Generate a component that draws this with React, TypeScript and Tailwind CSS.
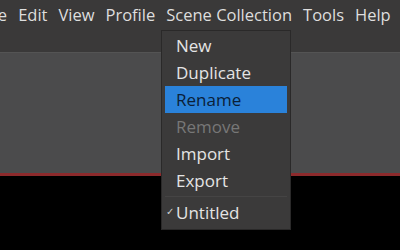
export default function App() {
  const items = [
    { label: "New" },
    { label: "Duplicate" },
    { label: "Rename", active: true },
    { label: "Remove", disabled: true },
    { label: "Import" },
    { label: "Export" },
  ];

  return (
    <div
      className="relative w-[400px] h-[250px] overflow-hidden bg-black text-[17px]"
      style={{ fontFamily: '"Open Sans", "Noto Sans", sans-serif' }}
    >
      {/* menu bar + toolbar strip */}
      <div className="h-[52px] bg-[#3a3939]">
        <div className="flex h-[30px] items-center gap-[11px] whitespace-nowrap text-[16.5px] text-[#dedede] ml-[-19px]">
          <span>File</span>
          <span>Edit</span>
          <span>View</span>
          <span>Profile</span>
          <span>Scene Collection</span>
          <span>Tools</span>
          <span>Help</span>
        </div>
      </div>
      {/* preview panel */}
      <div className="h-[121px] bg-[#4b4b4c] border-t border-[#545454]" />
      <div className="h-[3px] bg-[#8c2a2c]" />

      {/* dropdown */}
      <div className="absolute left-[161px] top-[30px] w-[130px] h-[200px] bg-[#3b3a3a] border border-[#2a2929] pt-[1px] px-[3px] whitespace-nowrap">
        {items.map((it) => (
          <div
            key={it.label}
            className={
              "h-[27px] flex items-center pl-[11px] " +
              (it.active
                ? "bg-[#2a82da] text-[#0a2038]"
                : it.disabled
                ? "text-[#777777]"
                : "text-[#e4e4e4]")
            }
          >
            {it.label}
          </div>
        ))}
        <div className="h-[5px] flex items-center">
          <div className="h-px w-full bg-[#454444]" />
        </div>
        <div className="h-[27px] flex items-center text-[#e4e4e4] relative pl-[11px]">
          <span className="absolute left-[1px] top-[5px] text-[10px] text-[#d0d0d0]">✓</span>
          Untitled
        </div>
      </div>
    </div>
  );
}
